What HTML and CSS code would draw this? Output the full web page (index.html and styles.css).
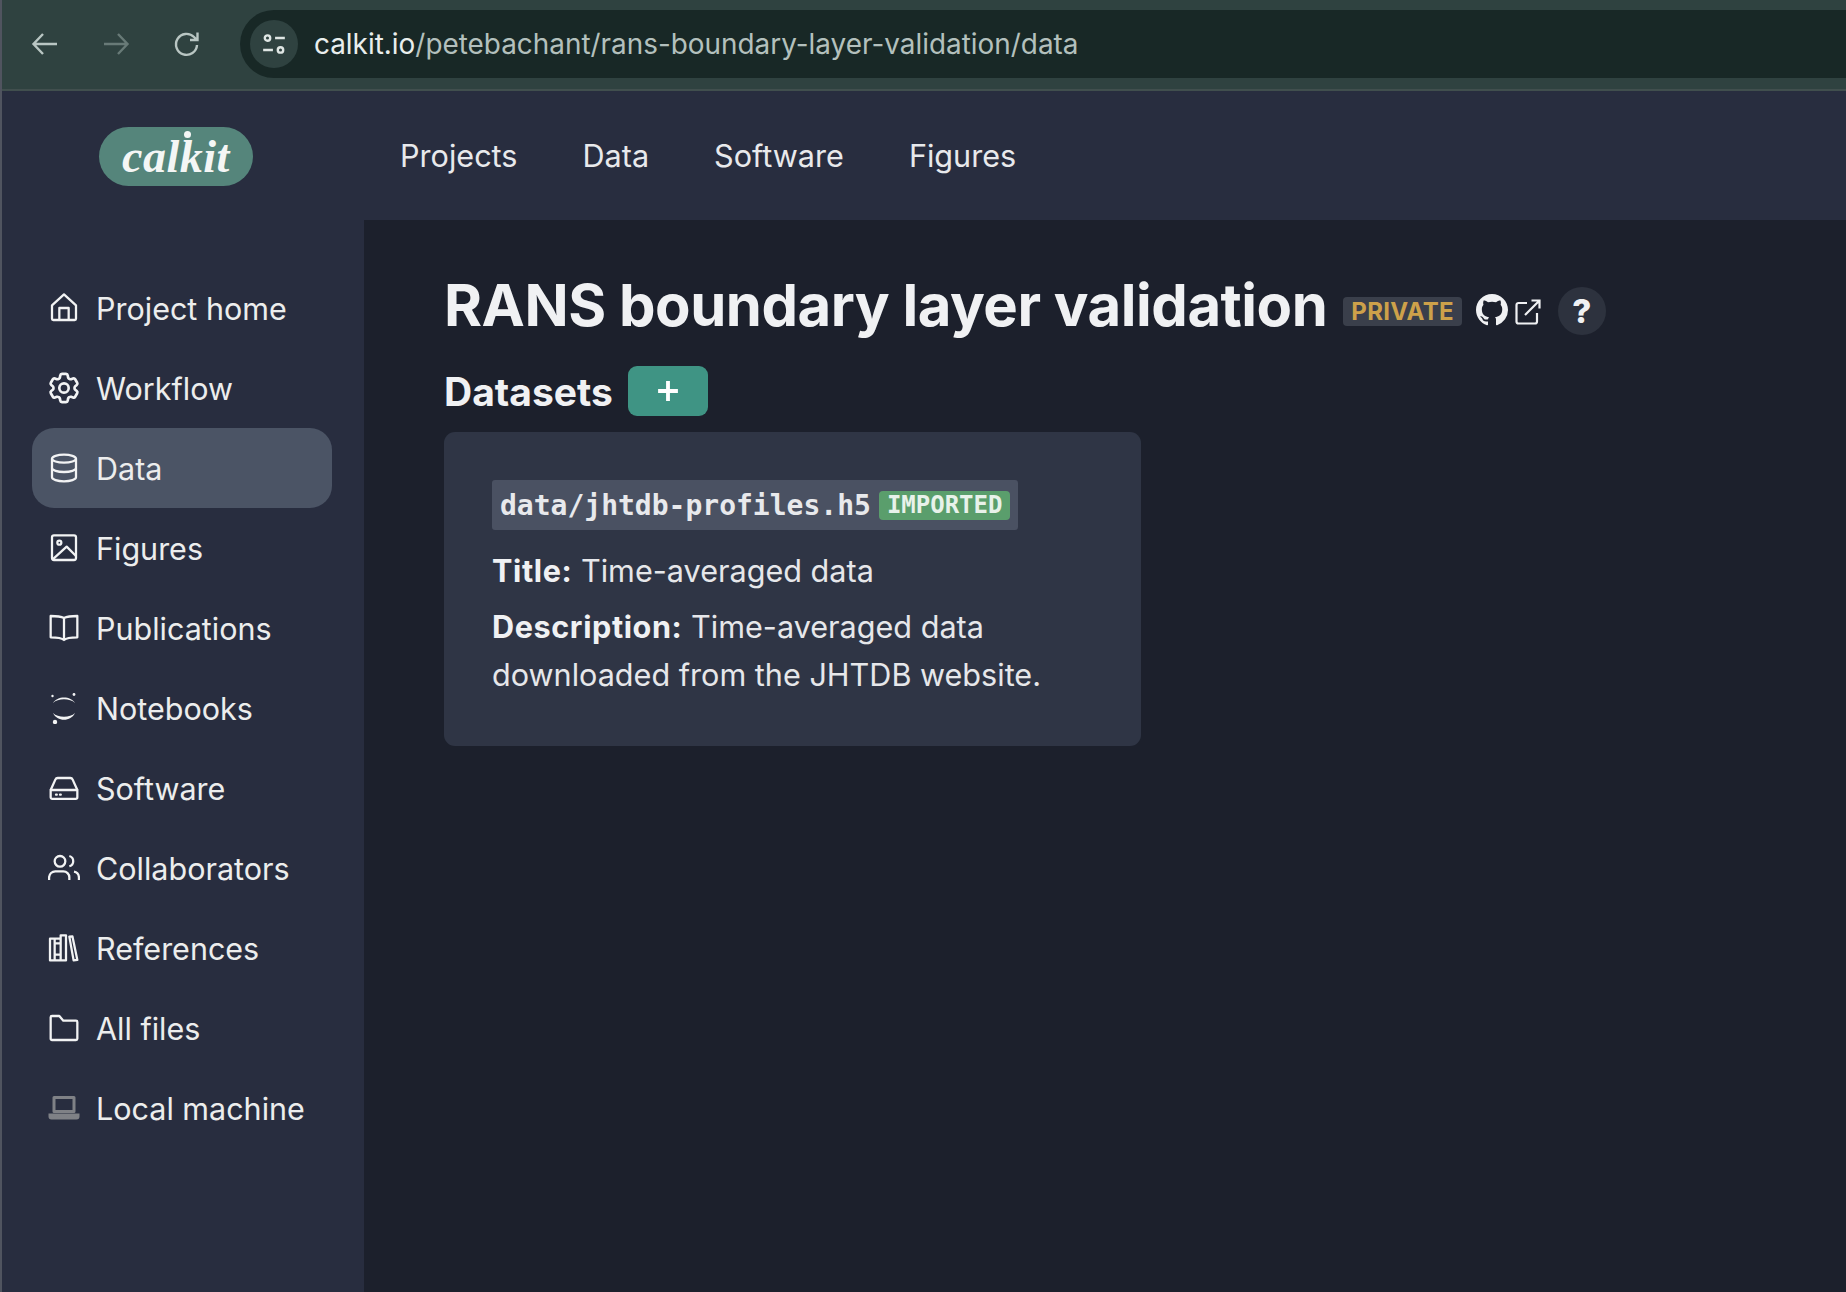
FILE: index.html
```html
<!DOCTYPE html>
<html lang="en">
<head>
    <meta charset="UTF-8">
    <title>RANS boundary layer validation</title>
    <link rel="stylesheet" href="styles.css">
</head>
<body>
    <div class="browser-bar">
        <svg class="browser-icon" viewBox="0 0 32 32"><path d="M28 16H5M14 6 4.500 16 14 26"/></svg>
        <svg class="browser-icon dim" viewBox="0 0 32 32"><path d="M4 16h23M18 6l9.500 10L18 26"/></svg>
        <svg class="browser-icon" viewBox="0 0 32 32"><path d="M26 17a10.500 10.500 0 1 1-3-8l3 3M26.500 4.500V12H19"/></svg>
        <div class="url-pill">
            <span class="site-btn">
                <svg viewBox="0 0 24 24"><circle cx="6" cy="6.500" r="2.500"/><path d="M13 6.500h9M2 17.500h9"/><circle cx="18" cy="17.500" r="2.500"/></svg>
            </span>
            <span class="url"><b>calkit.io</b>/petebachant/rans-boundary-layer-validation/data</span>
        </div>
    </div>

    <header class="topnav">
        <a class="logo"><span class="logo-text">calkit</span></a>
        <nav class="topnav-links">
            <a>Projects</a>
            <a>Data</a>
            <a>Software</a>
            <a>Figures</a>
        </nav>
    </header>

    <div class="layout">
        <aside class="sidebar">
            <a class="side-item">
                <svg viewBox="0 0 24 24"><path d="M3 10 12 1.800l9 8.200v10a1 1 0 0 1-1 1H4a1 1 0 0 1-1-1zM8.500 21v-9h7v9"/></svg>
                Project home
            </a>
            <a class="side-item">
                <svg viewBox="1.750 1.750 20.500 20.500"><path d="M9.594 3.940c.09-.542.56-.94 1.110-.94h2.593c.55 0 1.020.398 1.110.94l.213 1.281c.063.374.313.686.645.870.074.04.147.083.22.127.325.196.72.257 1.075.124l1.217-.456a1.125 1.125 0 0 1 1.370.49l1.296 2.247a1.125 1.125 0 0 1-.26 1.431l-1.003.827c-.293.241-.438.613-.43.992a7.723 7.723 0 0 1 0 .255c-.008.378.137.75.43.991l1.004.827c.424.35.534.955.26 1.430l-1.298 2.247a1.125 1.125 0 0 1-1.369.491l-1.217-.456c-.355-.133-.75-.072-1.076.124a6.470 6.470 0 0 1-.22.128c-.331.183-.581.495-.644.869l-.213 1.281c-.09.543-.56.94-1.110.94h-2.594c-.55 0-1.019-.398-1.110-.94l-.213-1.281c-.062-.374-.312-.686-.644-.87a6.520 6.520 0 0 1-.22-.127c-.325-.196-.72-.257-1.076-.124l-1.217.456a1.125 1.125 0 0 1-1.369-.49l-1.297-2.247a1.125 1.125 0 0 1 .26-1.431l1.004-.827c.292-.24.437-.613.43-.991a6.932 6.932 0 0 1 0-.255c.007-.38-.138-.751-.43-.992l-1.004-.827a1.125 1.125 0 0 1-.26-1.430l1.297-2.247a1.125 1.125 0 0 1 1.370-.491l1.216.456c.356.133.751.072 1.076-.124.072-.044.146-.086.22-.128.332-.183.582-.495.644-.869l.214-1.280Z"/><path d="M15 12a3 3 0 1 1-6 0 3 3 0 0 1 6 0Z"/></svg>
                Workflow
            </a>
            <a class="side-item active">
                <svg viewBox="0 0 24 24"><ellipse cx="12" cy="5" rx="9" ry="3"/><path d="M3 5v14a9 3 0 0 0 18 0V5M3 12a9 3 0 0 0 18 0"/></svg>
                Data
            </a>
            <a class="side-item">
                <svg viewBox="0 0 24 24"><rect x="3" y="2.500" width="18" height="18.500" rx="1.500"/><circle cx="8.500" cy="8" r="1.500"/><path d="M3.500 20.500 14 11l7 7"/></svg>
                Figures
            </a>
            <a class="side-item">
                <svg viewBox="0 0 24 24"><path d="M12 21V4.500C10 3.500 7.500 3 2 3v16c5 0 8 .2 10 2 2-1.800 5-2 10-2V3c-5.500 0-8 .5-10 1.500"/></svg>
                Publications
            </a>
            <a class="side-item">
                <svg class="solid" viewBox="0 0 32 32"><path d="M5 11C9 3.500 23 3.500 27 11 22 6 10 6 5 11Z"/><path d="M5 21C10 26 22 26 27 21 23 30 9 30 5 21Z"/><circle cx="4.500" cy="4" r="1.200"/><circle cx="26" cy="2.500" r="1.400"/><circle cx="7" cy="30" r="2.200"/></svg>
                Notebooks
            </a>
            <a class="side-item">
                <svg viewBox="0 0 24 24"><path d="M2 13.500 5.500 5.700A2 2 0 0 1 7.300 4.500h9.400a2 2 0 0 1 1.800 1.200l3.500 7.800"/><path d="M2 13.500h20v5.500a1.200 1.200 0 0 1-1.200 1.200H3.200A1.200 1.200 0 0 1 2 19z"/><path class="dots" d="M6 17h.6M9 17h.6"/></svg>
                Software
            </a>
            <a class="side-item">
                <svg viewBox="0 0 24 24"><path d="M16 21v-2a4.500 4.500 0 0 0-4.500-4.500h-6A5 5 0 0 0 .8 19v2"/><circle cx="9" cy="7" r="4"/><path d="M23.200 21v-2a4.500 4.500 0 0 0-3.700-4.200M16 3a4 4 0 0 1 0 7.700"/></svg>
                Collaborators
            </a>
            <a class="side-item">
                <svg viewBox="0 0 24 24"><path d="M1.500 5H5v16.300H1.500zM5 5h4.500v16.300H5zM5 8.500h4.500M5 17h4.500M9.500 2.500h4V21.300h-4zM16 3.500l2.300-.3 3.700 17.700-2.800.4z"/></svg>
                References
            </a>
            <a class="side-item">
                <svg viewBox="0 0 24 24"><path d="M2 4a1 1 0 0 1 1-1h5.500l3 3.500H21a1 1 0 0 1 1 1V20a1 1 0 0 1-1 1H3a1 1 0 0 1-1-1z"/></svg>
                All files
            </a>
            <a class="side-item">
                <svg class="laptop" viewBox="0 0 32 32"><path class="laptop-screen" d="M6 5.500h20v14H6z"/><path class="laptop-base" d="M.5 21.500h31v3a3 3 0 0 1-3 3h-25a3 3 0 0 1-3-3z"/></svg>
                Local machine
            </a>
        </aside>

        <main class="content">
            <div class="title-row">
                <h1>RANS boundary layer validation</h1>
                <span class="badge-private">PRIVATE</span>
                <svg class="gh-icon" viewBox="0 0 16 16"><path d="M8 0C3.580 0 0 3.580 0 8c0 3.540 2.290 6.530 5.470 7.590.4.070.55-.17.55-.38 0-.19-.01-.82-.01-1.490-2.010.37-2.530-.49-2.690-.94-.09-.23-.48-.94-.82-1.130-.28-.15-.68-.52-.01-.53.63-.01 1.080.58 1.230.82.72 1.210 1.870.87 2.330.66.070-.52.28-.87.51-1.070-1.780-.2-3.640-.89-3.640-3.950 0-.87.31-1.590.82-2.150-.08-.2-.36-1.020.08-2.120 0 0 .67-.21 2.200.82.64-.18 1.320-.27 2-.27s1.360.09 2 .27c1.530-1.040 2.200-.82 2.200-.82.44 1.100.16 1.920.08 2.120.51.56.82 1.270.82 2.150 0 3.070-1.870 3.750-3.650 3.950.29.25.54.73.54 1.480 0 1.070-.01 1.930-.01 2.200 0 .21.15.46.55.38A8.010 8.010 0 0 0 16 8c0-4.420-3.580-8-8-8z"/></svg>
                <svg class="ext-icon" viewBox="0 0 26 26"><path d="M22 14v8.500a2 2 0 0 1-2 2H3.500a2 2 0 0 1-2-2V6a2 2 0 0 1 2-2H12M10 16 24.500 1.500M16.500 1.500h8v8"/></svg>
                <span class="help-btn">?</span>
            </div>

            <div class="section-row">
                <h2>Datasets</h2>
                <button class="add-btn">
                    <svg viewBox="0 0 20 20"><path d="M10 1v18M1 10h18"/></svg>
                </button>
            </div>

            <div class="card">
                <div class="code-box">
                    <code>data/jhtdb-profiles.h5</code>
                    <span class="badge-imported">IMPORTED</span>
                </div>
                <p class="field first"><strong>Title:</strong> Time-averaged data</p>
                <p class="field"><strong>Description:</strong> Time-averaged data downloaded from the JHTDB website.</p>
            </div>
        </main>
    </div>
</body>
</html>
```

FILE: styles.css
```css
* {
    box-sizing: border-box;
}

html, body {
    height: 100%;
}

body {
    margin: 0;
    display: flex;
    flex-direction: column;
    overflow: hidden;
    font-family: Inter, "Noto Sans", sans-serif;
    color: #f0f1f3;
    background-color: #1c202c;
    border-left: 2px solid #50545f;
}

/* browser chrome */
.browser-bar {
    display: flex;
    align-items: center;
    height: 91px;
    flex-shrink: 0;
    padding: 3px 0 4px 27px;
    background-color: #2f4240;
    border-bottom: 2px solid #414f4e;
}

.browser-icon {
    width: 32px;
    height: 32px;
    margin-right: 39px;
    fill: none;
    stroke: #b9c6c3;
    stroke-width: 2.400;
}

.browser-icon.dim {
    stroke: #687a77;
}

.url-pill {
    display: flex;
    align-items: center;
    flex: 1;
    height: 68px;
    margin-left: -2px;
    padding-left: 10px;
    border-radius: 34px 0 0 34px;
    background-color: #182826;
}

.site-btn {
    display: flex;
    align-items: center;
    justify-content: center;
    width: 48px;
    height: 48px;
    border-radius: 50%;
    background-color: #2f4240;
}

.site-btn svg {
    width: 26px;
    height: 26px;
    fill: none;
    stroke: #dfe6e4;
    stroke-width: 2.200;
}

.url {
    margin-left: 16px;
    font-size: 27.900px;
    color: #b3c0bd;
}

.url b {
    font-weight: 400;
    color: #e9eeed;
}

/* site header */
.topnav {
    display: flex;
    align-items: center;
    height: 129px;
    flex-shrink: 0;
    padding-left: 97px;
    background-color: #282d3f;
}

.logo {
    display: flex;
    align-items: center;
    justify-content: center;
    width: 154px;
    height: 59px;
    margin-top: 2px;
    border-radius: 30px;
    background-color: #55857b;
}

.logo-text {
    position: relative;
    font-family: "Liberation Serif", serif;
    font-style: italic;
    font-weight: 700;
    font-size: 46px;
    letter-spacing: 0.500px;
    color: #f4f6f5;
}

.logo-text::after {
    content: "";
    position: absolute;
    left: 62px;
    top: 1px;
    width: 7px;
    height: 7px;
    border-radius: 50%;
    background-color: #f4f6f5;
}

.topnav-links {
    display: flex;
    gap: 65px;
    margin-left: 147px;
    font-size: 30.600px;
    color: #e8e9ec;
}

/* sidebar */
.layout {
    display: flex;
    flex: 1;
    min-height: 0;
}

.sidebar {
    display: flex;
    flex-direction: column;
    width: 362px;
    flex-shrink: 0;
    padding: 48px 32px 0 30px;
    background-color: #282d3f;
}

.side-item {
    display: flex;
    align-items: center;
    gap: 16px;
    height: 80px;
    padding-left: 16px;
    border-radius: 22px;
    font-size: 30.500px;
    color: #eceded;
}

.side-item.active {
    background-color: #4b5465;
}

.side-item svg {
    width: 32px;
    height: 32px;
    flex-shrink: 0;
    fill: none;
    stroke: #f2f3f4;
    stroke-width: 1.700;
    stroke-linejoin: round;
}

.side-item svg.solid {
    fill: #f2f3f4;
    stroke: none;
}

.side-item svg.laptop {
    stroke: none;
}

.laptop-screen {
    fill: none;
    stroke: #7f8186;
    stroke-width: 3;
}

.laptop-base {
    fill: #7f8186;
}

.dots {
    stroke-linecap: round;
}

/* main column */
.content {
    flex: 1;
    padding: 47px 0 0 80px;
}

.title-row {
    display: flex;
    align-items: center;
    height: 76px;
}

h1 {
    margin: 0;
    font-size: 58px;
    font-weight: 700;
    letter-spacing: -0.470px;
    white-space: nowrap;
}

.badge-private {
    margin-left: 16px;
    margin-top: 13px;
    padding: 0 8px;
    height: 29px;
    line-height: 29px;
    border-radius: 4px;
    font-size: 24px;
    font-weight: 700;
    letter-spacing: 0.300px;
    color: #cda14a;
    background-color: #3a3f4b;
}

.gh-icon {
    width: 32px;
    height: 32px;
    margin-left: 14px;
    margin-top: 10px;
    fill: #f0f1f3;
}

.ext-icon {
    width: 26px;
    height: 26px;
    margin-left: 7px;
    margin-top: 14px;
    fill: none;
    stroke: #f0f1f3;
    stroke-width: 2.200;
}

.help-btn {
    display: flex;
    align-items: center;
    justify-content: center;
    width: 48px;
    height: 48px;
    margin-left: 17px;
    margin-top: 12px;
    border-radius: 50%;
    font-size: 33px;
    font-weight: 800;
    background-color: #2d323e;
}

.section-row {
    display: flex;
    align-items: center;
    gap: 15px;
    height: 50px;
    margin-top: 23px;
}

h2 {
    margin: 0;
    font-size: 39px;
    font-weight: 700;
}

.add-btn {
    display: flex;
    align-items: center;
    justify-content: center;
    width: 80px;
    height: 50px;
    padding: 0;
    border: none;
    border-radius: 9px;
    background-color: #3f9484;
}

.add-btn svg {
    width: 22px;
    height: 22px;
    fill: none;
    stroke: #fff;
    stroke-width: 3.500;
}

.card {
    width: 697px;
    margin-top: 16px;
    padding: 48px 48px 47px;
    border-radius: 11px;
    background-color: #2f3545;
}

.code-box {
    display: inline-flex;
    align-items: center;
    gap: 8px;
    height: 50px;
    padding: 0 8px;
    border-radius: 3px;
    background-color: #4a5162;
}

code {
    font-family: "DejaVu Sans Mono", "Liberation Mono", monospace;
    font-size: 28px;
    font-weight: 700;
    color: #e8e9ec;
}

.badge-imported {
    height: 29px;
    padding: 0 8px;
    line-height: 29px;
    border-radius: 4px;
    font-family: "DejaVu Sans Mono", "Liberation Mono", monospace;
    font-size: 24px;
    font-weight: 700;
    color: #e8f2ea;
    background-color: #5a9e6c;
}

.field {
    margin: 8px 0 0;
    font-size: 30.600px;
    line-height: 48px;
    color: #e6e7ea;
}

.field.first {
    margin-top: 17px;
}

.field strong {
    letter-spacing: 0.600px;
    color: #f0f1f3;
}
```
